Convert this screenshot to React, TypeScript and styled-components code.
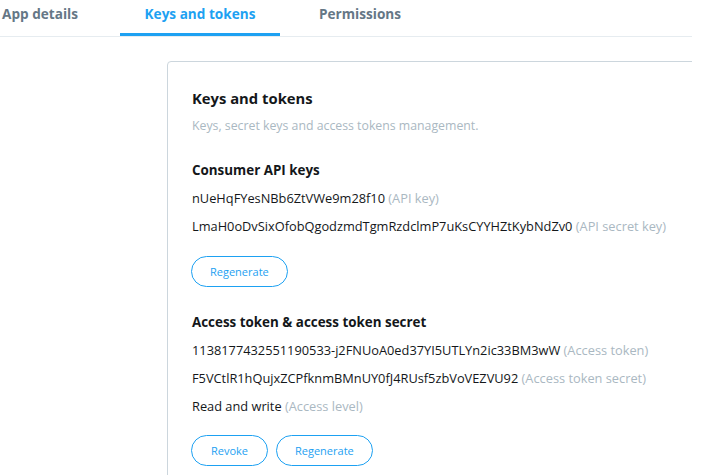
import React from "react";
import styled, { createGlobalStyle } from "styled-components";

const GlobalStyle = createGlobalStyle`
  html, body {
    margin: 0;
    padding: 0;
    background: #ffffff;
  }
  body {
    font-family: "Open Sans", "Noto Sans", sans-serif;
    color: #14171a;
  }
`;

const Page = styled.div`
  width: 692px;
  height: 475px;
  overflow: hidden;
`;

const TabBar = styled.nav`
  border-bottom: 1px solid #e6ecf0;
`;

const TabList = styled.div`
  display: flex;
  margin-left: -40px;
`;

const Tab = styled.div<{ $active?: boolean }>`
  box-sizing: border-box;
  width: 160px;
  height: 36px;
  padding-top: 4px;
  line-height: 20px;
  text-align: center;
  font-size: 13.6px;
  font-weight: 700;
  color: ${(p) => (p.$active ? "#1da1f2" : "#657786")};
  border-bottom: 3px solid ${(p) => (p.$active ? "#1da1f2" : "transparent")};
  white-space: nowrap;
`;

const Content = styled.main`
  padding: 24px 0 0 167px;
`;

const Card = styled.section`
  box-sizing: border-box;
  width: 640px;
  min-height: 480px;
  border: 1px solid #ccd6dd;
  border-radius: 4px;
  padding: 25px 24px;
`;

const Title = styled.h2`
  margin: 0;
  font-size: 14.8px;
  line-height: 22px;
  font-weight: 700;
  color: #14171a;
`;

const Subtitle = styled.p`
  margin: 8px 0 0;
  font-size: 12.3px;
  line-height: 18px;
  color: #aab8c2;
`;

const SectionHeading = styled.h3<{ $gap: number }>`
  margin: ${(p) => p.$gap}px 0 4px;
  font-size: 13.4px;
  line-height: 20px;
  font-weight: 700;
  color: #14171a;
`;

const ValueRow = styled.div`
  font-size: 12.8px;
  line-height: 28px;
  color: #14171a;
  white-space: nowrap;
`;

const Hint = styled.span`
  color: #aab8c2;
`;

const Buttons = styled.div<{ $gap: number }>`
  display: flex;
  gap: 8px;
  margin-top: ${(p) => p.$gap}px;
  margin-left: -1px;
`;

const OutlineButton = styled.button`
  box-sizing: border-box;
  height: 31px;
  min-width: 77px;
  padding: 0 18px;
  border: 1px solid #1da1f2;
  border-radius: 16px;
  background: #ffffff;
  color: #1da1f2;
  font-family: "Open Sans", "Noto Sans", sans-serif;
  font-size: 11px;
  line-height: 29px;
  cursor: pointer;
`;

type Item = { value: string; hint: string };

const consumer: Item[] = [
  { value: "nUeHqFYesNBb6ZtVWe9m28f10", hint: "(API key)" },
  {
    value: "LmaH0oDvSixOfobQgodzmdTgmRzdclmP7uKsCYYHZtKybNdZv0",
    hint: "(API secret key)",
  },
];

const access: Item[] = [
  {
    value: "1138177432551190533-j2FNUoA0ed37YI5UTLYn2ic33BM3wW",
    hint: "(Access token)",
  },
  {
    value: "F5VCtlR1hQujxZCPfknmBMnUY0fJ4RUsf5zbVoVEZVU92",
    hint: "(Access token secret)",
  },
  { value: "Read and write", hint: "(Access level)" },
];

function Rows({ items }: { items: Item[] }) {
  return (
    <>
      {items.map((it) => (
        <ValueRow key={it.value}>
          {it.value} <Hint>{it.hint}</Hint>
        </ValueRow>
      ))}
    </>
  );
}

export default function App() {
  return (
    <>
      <GlobalStyle />
      <Page>
        <TabBar>
          <TabList>
            <Tab>App details</Tab>
            <Tab $active>Keys and tokens</Tab>
            <Tab>Permissions</Tab>
          </TabList>
        </TabBar>
        <Content>
          <Card>
            <Title>Keys and tokens</Title>
            <Subtitle>Keys, secret keys and access tokens management.</Subtitle>

            <SectionHeading $gap={25}>Consumer API keys</SectionHeading>
            <Rows items={consumer} />
            <Buttons $gap={16}>
              <OutlineButton>Regenerate</OutlineButton>
            </Buttons>

            <SectionHeading $gap={25}>Access token &amp; access token secret</SectionHeading>
            <Rows items={access} />
            <Buttons $gap={15}>
              <OutlineButton>Revoke</OutlineButton>
              <OutlineButton>Regenerate</OutlineButton>
            </Buttons>
          </Card>
        </Content>
      </Page>
    </>
  );
}
